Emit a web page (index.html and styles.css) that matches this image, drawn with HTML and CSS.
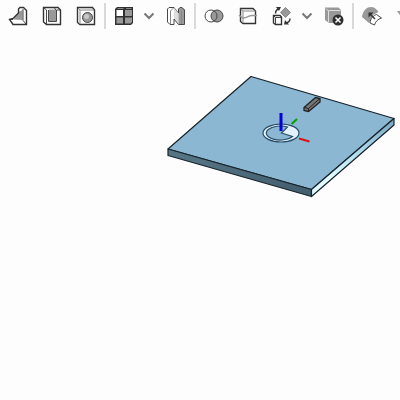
FILE: index.html
```html
<!DOCTYPE html>
<html lang="en">
<head>
<meta charset="UTF-8">
<meta name="viewport" content="width=device-width, initial-scale=1.0">
<title>Part Studio</title>
<link rel="stylesheet" href="styles.css">
</head>
<body>
<div class="toolbar">
<button class="tool" aria-label="Rib">
<svg viewBox="0 0 20 20"><path class="face" d="M1.5 13.5 5 17.5V19H18.5V4.5L15.5 1.5H12L10.5 3V7L5 12.5Z"/><path class="shade" d="M11 5.5 14.5 4V14L5 13.5Z"/><path class="thin" d="M15 3V14.5L18 18M1.5 13.5H5"/><path class="line" d="M1.5 13.5 5 12.5 10.5 7V3L12 1.5H15.5L18.5 4.5V18.5H5Z"/></svg>
</button>
<button class="tool" aria-label="Thicken">
<svg viewBox="0 0 20 20"><path class="line face" d="M1.5 1.5H16L18.5 4V18.5H4.5L1.5 16Z"/><path class="shade" d="M7 3.5H14V15H7Z"/><path class="thin" d="M4.5 18V4L2 2M6.5 4V15.5H14.5V4H18M14 4 12.5 2"/></svg>
</button>
<button class="tool" aria-label="Hole">
<svg viewBox="0 0 20 20"><path class="line face" d="M1.5 1.5H16.5L18.5 4V18.5H4L1.5 16.5Z"/><path class="soft" d="M4 18V4L2 2M4 4H18"/><circle class="shade" cx="11.5" cy="11.5" r="5"/><circle class="thin" cx="11.5" cy="11.5" r="5"/><circle class="glow" cx="10.5" cy="10.5" r="2.5"/></svg>
</button>
<span class="separator"></span>
<button class="tool" aria-label="Linear pattern">
<svg viewBox="0 0 20 20"><path class="dark" d="M3 1H19V17L17 19H1V3Z"/><path class="face" d="M2.5 4H9V10H2.5Z"/><path class="shade" d="M11 4H18V10H11ZM2.5 11.5H9V17.5H2.5ZM11 11.5H18V16L16.5 17.5H11Z"/><path class="soft" d="M3.5 2.5H9.5M12 2.5H17.5"/></svg>
</button>
<button class="menu" aria-label="More patterns">
<svg viewBox="0 0 18 20"><path class="chevron" d="M3.5 7.5 8 12 12.5 7.5"/></svg>
</button>
<button class="tool" aria-label="Mirror">
<svg viewBox="0 0 20 20"><path class="face" d="M1.5 3 3 1.5H8V15L4 18.5 1.5 16Z"/><path class="pale" d="M8 1.5 12.5 7V17L8 13Z"/><path class="shade" d="M12.5 3 14 1.5H16.5L18.5 3.5V18.5H12.5Z"/><path class="soft" d="M4.5 5V18M4.5 5 8 1.5 12.5 7M15.5 5V18"/><path class="thin" d="M8 1.5H3L1.5 3V16L4 18.5H8V13L12.5 18.5H18.5V4L16 1.5H14L12.5 3V7"/></svg>
</button>
<span class="separator"></span>
<button class="tool" aria-label="Boolean">
<svg viewBox="0 0 20 20"><circle class="face" cx="7" cy="10" r="6"/><circle class="shade" cx="13" cy="10" r="6"/><circle class="thin" cx="7" cy="10" r="6"/><circle class="thin" cx="13" cy="10" r="6"/></svg>
</button>
<button class="tool" aria-label="Split">
<svg viewBox="0 0 20 20"><path class="line face" d="M2.5 2.5H15L17.5 5V17.5H5L2.5 15.5Z"/><path class="soft" d="M2.5 3 5 5V17M5 5H17.5"/><path class="cut" d="M1 9 4.5 12C9 12.5 10.5 9.5 14 9.5H19"/></svg>
</button>
<button class="tool" aria-label="Transform">
<svg viewBox="0 0 20 20"><path class="line face" d="M1.5 9.5H8L9.5 11V18.5H3.5L1.5 17Z"/><path class="thin" d="M3.5 18V11.5H9M3.5 11.5 2 10"/><path class="soft shade" d="M13.5 1.5 18.5 6.5 13.5 11.5 8.5 6.5Z"/><path class="line" d="M3.5 7.5C3.5 5 4.5 3.5 7 2.5M18 12.5C18 14.5 16.5 16.5 14 17"/><path class="dark" d="M4 1H9L7 5ZM12 18.5 13 14 17 18.5Z"/></svg>
</button>
<button class="menu" aria-label="More transforms">
<svg viewBox="0 0 18 20"><path class="chevron" d="M3.5 7.5 8 12 12.5 7.5"/></svg>
</button>
<button class="tool" aria-label="Delete part">
<svg viewBox="0 0 20 20"><path class="shade" d="M1 1.5H14.5L17 4V17H5L1 14Z"/><path class="edge" d="M2 2.5 4.5 5V16.5M4.5 4.5H16.5"/><circle class="dark" cx="14" cy="14" r="5.5"/><path class="cross" d="M11.5 11.5 16.5 16.5M16.5 11.5 11.5 16.5"/></svg>
</button>
<span class="separator"></span>
<button class="tool" aria-label="Move face">
<svg viewBox="0 0 20 20"><path class="shade" d="M0 11C1 4 5 1 9 1 12 1 15 3 16.5 6L11 9 7 17Z"/><path class="thin face" d="M8 17C8.5 12 11.5 9.5 14.5 8.5L19.5 12C16 13 13.5 15.5 12.5 19Z"/><path class="line" d="M13 13 8 8"/><path class="dark" d="M6.5 6.5H11.5L6.5 11.5Z"/></svg>
</button>
<button class="menu" aria-label="More tools">
<svg viewBox="0 0 18 20"><path class="shade" d="M8 5H18L13 12Z"/></svg>
</button>
</div>
<main class="viewport">
<svg class="model" viewBox="0 32 400 368" role="img" aria-label="Plate model">
<defs>
<linearGradient id="side" x1="1" y1="0" x2="0" y2="1">
<stop offset="0" stop-color="#78a5c0"/>
<stop offset="0.5" stop-color="#b9e3f5"/>
<stop offset="0.75" stop-color="#e2fbff"/>
</linearGradient>
<linearGradient id="front">
<stop offset="0" stop-color="#567686"/>
<stop offset="1" stop-color="#435e6e"/>
</linearGradient>
</defs>
<!-- plate -->
<g class="outline">
<path fill="#8bb7d3" d="M251 76.5 394 118.5 311.5 189.5 168 149Z"/>
<path fill="url(#front)" d="M168 149 311.5 189.5V196.5L168 155.5Z"/>
<path fill="url(#side)" d="M394 118.5V125L311.5 196.5V189.5Z"/>
</g>
<!-- sketch -->
<g class="sketch">
<ellipse class="ring" cx="281" cy="133" rx="18" ry="9"/>
<path class="ring-hole" d="M287.5 127A14 7 0 1 0 292.5 136.5L281.5 133Z"/>
</g>
<!-- key -->
<path class="key" d="M304 107.5 315.5 97.5 320 98.5V102L308.5 111.5 304 110.5Z"/>
<path class="key-edge" d="M304 107.5 308.5 108.5V111.5M308.5 108.5 320 98.5"/>
<!-- origin axes -->
<path class="axis" stroke="#00a000" d="M291.5 124 297 119"/>
<path class="axis" stroke="#dd1111" d="M299 138.5 309.5 141.5"/>
<path class="axis axis-z" d="M281 113V131"/>
</svg>
</main>
</body>
</html>
```

FILE: styles.css
```css
* {
margin: 0;
padding: 0;
box-sizing: border-box;
}
body {
background-color: #fdfdfd;
font-family: "Open Sans", Arial, sans-serif;
}
/* Toolbar */
.toolbar {
display: flex;
align-items: center;
height: 32px;
padding-left: 1px;
overflow: hidden;
}
.tool,
.menu {
display: flex;
flex: none;
align-items: center;
justify-content: center;
width: 34px;
height: 32px;
border: none;
background: none;
cursor: pointer;
}
.menu {
width: 18px;
}
.tool svg {
width: 20px;
height: 20px;
}
.menu svg {
width: 18px;
height: 20px;
}
.separator {
flex: none;
width: 2px;
height: 26px;
margin: 0 1px;
background-color: #d9d9d9;
}
/* Icons */
.toolbar path,
.toolbar circle {
fill: none;
}
.toolbar .face {
fill: #fff;
}
.toolbar .shade {
fill: #999;
}
.toolbar .pale {
fill: #ddd;
}
.toolbar .dark {
fill: #303030;
}
.toolbar .glow {
fill: #c8c8c8;
}
.line {
stroke: #333;
stroke-width: 1.4;
}
.thin {
stroke: #484848;
}
.soft {
stroke: #888;
}
.edge {
stroke: #ddd;
}
.cut {
stroke: #999;
stroke-width: 1.5;
}
.cross {
stroke: #fff;
stroke-width: 1.5;
}
.chevron {
stroke: #777;
stroke-width: 2;
}
/* Model view */
.model {
display: block;
width: 100%;
}
.outline {
stroke: #17232b;
stroke-width: 1.2;
stroke-linejoin: round;
}
.sketch {
stroke: #294e68;
stroke-width: 1.2;
}
.ring {
fill: #e2f1fa;
}
.ring-hole {
fill: #8bb7d3;
}
.key {
fill: #777;
stroke: #222;
stroke-width: 1.3;
}
.key-edge {
fill: none;
stroke: #222;
}
.axis {
stroke-width: 2;
}
.axis-z {
stroke: #0000d8;
stroke-width: 3;
}
```
